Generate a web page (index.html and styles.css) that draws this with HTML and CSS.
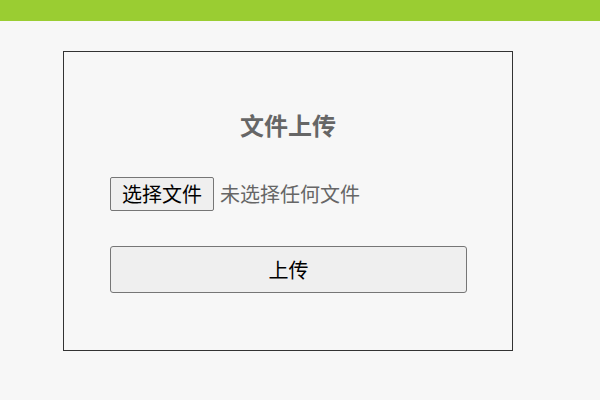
FILE: index.html
```html
<!DOCTYPE html>
<html lang="zh-CN">
<head>
<meta charset="utf-8">
<title>文件上传</title>
<link rel="stylesheet" href="styles.css">
</head>
<body>
<div class="topbar"></div>
<div class="panel">
  <h2 class="title">文件上传</h2>
  <div class="file-row">
    <label class="file-btn">选择文件<input type="file" class="file-input"></label>
    <span class="file-status">未选择任何文件</span>
  </div>
  <button class="upload-btn" type="button">上传</button>
</div>
</body>
</html>
```

FILE: styles.css
```css
html, body {
  margin: 0;
  padding: 0;
}
body {
  background: #f7f7f7;
  font-family: "Microsoft YaHei", "Noto Sans CJK SC", "Noto Sans", sans-serif;
  color: #666;
}
.topbar {
  height: 21px;
  background: #9acd32;
}
.panel {
  box-sizing: border-box;
  width: 450px;
  height: 300px;
  margin: 30px 0 0 63px;
  border: 1px solid #333;
  padding: 56px 46px 0 46px;
  display: flex;
  flex-direction: column;
}
.title {
  margin: 0;
  font-size: 24px;
  line-height: 34px;
  font-weight: bold;
  text-align: center;
  color: #666;
}
.file-row {
  margin-top: 35px;
  display: flex;
  align-items: center;
  gap: 6px;
  font-size: 20px;
}
.file-btn {
  box-sizing: border-box;
  height: 34px;
  padding: 0 11px;
  display: flex;
  align-items: center;
  background: #efefef;
  border: 1px solid #767676;
  border-radius: 2px;
  color: #000;
  line-height: 1;
}
.file-input {
  display: none;
}
.file-status {
  color: #666;
  line-height: 1;
}
.upload-btn {
  box-sizing: border-box;
  margin-top: 35px;
  width: 357px;
  height: 47px;
  background: #efefef;
  border: 1px solid #767676;
  border-radius: 3px;
  font-family: inherit;
  font-size: 20px;
  color: #000;
  padding: 0;
}
```
